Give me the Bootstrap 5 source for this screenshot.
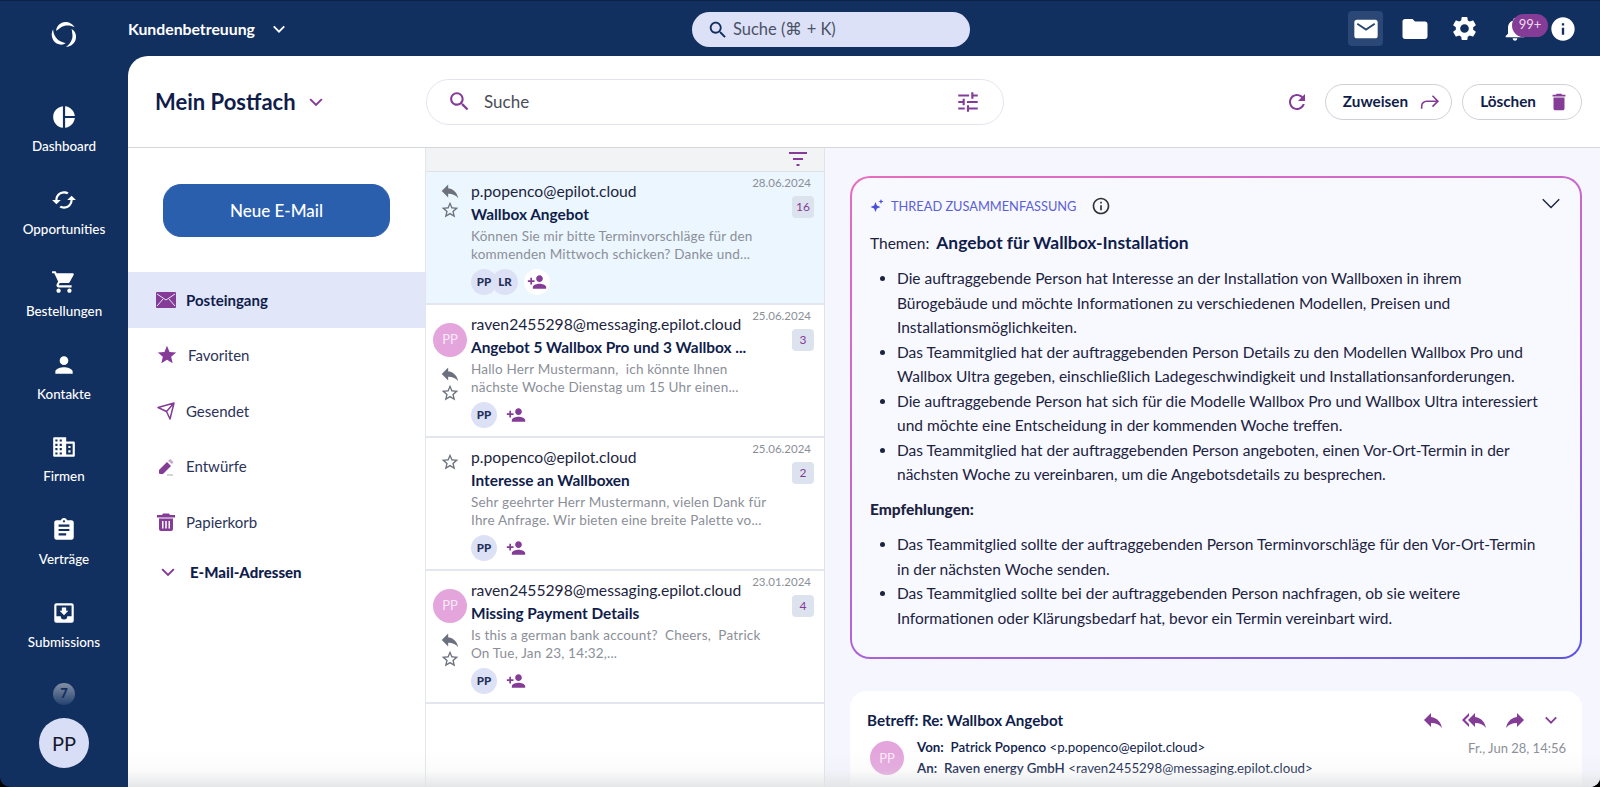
<!DOCTYPE html>
<html lang="de">
<head>
  <meta charset="UTF-8">
  <title>Mein Postfach</title>
  <link href="https://cdn.jsdelivr.net/npm/bootstrap@5.3.0/dist/css/bootstrap.min.css" rel="stylesheet">
  <style>
    html, body { height: 100%; }
    body { font-family: "Lato", "Liberation Sans", sans-serif; color: #101d4b; background: #000; overflow: hidden; }
    svg { display: block; fill: currentColor; flex: none; }
    .app-shell { width: 1600px; height: 787px; background: #12305f; border-top: 1px solid #0b2146; border-radius: 0 0 10px 10px; overflow: hidden; color: #fff; }
    .purple { color: #843c97; }

    /* left nav */
    .side-nav { width: 128px; flex: none; padding-top: 11px; }
    .logo-wrap { height: 45px; margin-bottom: 43px; }
    .nav-tile { height: 82.6px; font-size: 13.4px; font-weight: 500; padding-top: 4px; }
    .nav-tile svg { margin-bottom: 6px; }
    .beta-dot { width: 22px; height: 22px; border-radius: 50%; background: linear-gradient(#8490a6, #24426f); color: #12305f; font-size: 13px; font-weight: 900; margin-top: 5px; }
    .me-avatar { width: 50px; height: 50px; border-radius: 50%; background: #d9def7; color: #15192b; font-size: 20px; margin-top: 13px; }

    /* top bar */
    .top-row { height: 55px; flex: none; position: relative; padding-right: 23px; }
    .team-name { font-size: 15.8px; font-weight: 700; margin-right: 15px; }
    .top-search { position: absolute; left: 564px; top: 11px; width: 278px; height: 35px; border-radius: 18px; background: #dde1f8; color: #4b5266; padding-left: 15px; font-size: 16.5px; gap: 4px; }
    .top-search svg { color: #12305f; }
    .top-tile { width: 35px; height: 35px; border-radius: 4px; }
    .top-tile.on { background: #2b4776; }
    .top-tile + .top-tile { margin-left: 6px; }
    .top-tile.gear-tile { margin-left: 7px; }
    .bell-box { position: relative; width: 40px; margin-left: 11px; }
    .bell-count { position: absolute; left: 11px; top: -1px; width: 36px; height: 23px; border-radius: 12px; background: #843c97; color: #f0d8f0; font-size: 13px; }

    /* main panel */
    .main-panel { background: #fff; color: #101d4b; border-top-left-radius: 20px; overflow: hidden; position: relative; min-height: 0; }
    .head-row { height: 92px; border-bottom: 1px solid #d5d7da; padding: 0 18px 0 27px; flex: none; }
    .box-title { width: 271px; font-size: 22px; font-weight: 700; gap: 10px; }
    .box-search { width: 578px; height: 46px; border: 1px solid #e3e5ee; border-radius: 23px; padding: 0 22px 0 20px; font-size: 17px; color: #4a4d57; gap: 12px; }
    .pill-btn { height: 36px; border: 1px solid #cfd1d6; border-radius: 18px; background: #fff; color: #101d4b; font-size: 15.3px; font-weight: 700; padding: 0 11px 0 17px; gap: 12px; }
    .pill-btn + .pill-btn { margin-left: 10px; }

    .folder-col { width: 298px; flex: none; border-right: 1px solid #e3e6ee; }
    .new-mail { display: block; width: 227px; height: 53px; margin: 36px 0 35px 35px; border-radius: 18px; background: #2a5fae; border-color: #2a5fae; font-size: 17px; font-weight: 500; }
    .folder-row { height: 55.6px; padding-left: 28px; font-size: 15px; color: #2b3358; gap: 10px; }
    .folder-row.on { background: #e2e6f9; color: #101d4b; font-weight: 700; }
    .folder-addr { height: 44px; padding-left: 30px; font-size: 15px; font-weight: 900; gap: 12px; color: #101d4b; }

    .mail-col { width: 399px; flex: none; border-right: 1px solid #e0e3ea; }
    .mail-tools { height: 24px; background: #f1f3f5; border-bottom: 1px solid #dfe2e8; padding-right: 16px; }
    .mail-row { height: 133px; border-bottom: 2px solid #e3e6ee; padding: 9px 10px 0 3px; }
    .mail-row.on { background: #ebf6fe; }
    .mail-marks { width: 42px; flex: none; color: #6c717d; }
    .mark-reply { margin-top: -1px; }
    .mark-star { margin-top: -2px; }
    .mark-star.alone { margin-top: 5px; }
    .mail-body { min-width: 0; flex: 1; }
    .mail-from { font-size: 15.7px; line-height: 21px; color: #1d2440; }
    .mail-subj { font-size: 15.4px; font-weight: 700; line-height: 21px; margin-top: 2px; white-space: nowrap; }
    .mail-snip { font-size: 13.5px; letter-spacing: .2px; line-height: 18px; color: #8b8f98; width: 298px; margin-top: 2px; }
    .mail-who { margin-top: 6px; gap: 6px; }
    .face { width: 26px; height: 26px; border-radius: 50%; background: #dde1f6; font-size: 11.5px; font-weight: 900; color: #25305a; }
    .face + .face { margin-left: -5px; }
    .add-face { width: 26px; height: 26px; border-radius: 50%; }
    .mail-row.on .add-face { background: #fff; }
    .sender-dot { width: 34px; height: 34px; border-radius: 50%; background: #e3a5dc; color: #fbeaf8; font-size: 13px; margin: 9px 0 7px; }
    .mail-meta { width: 46px; flex: none; }
    .mail-date { font-size: 11.5px; color: #8b8f98; line-height: 14px; margin-top: -5px; white-space: nowrap; margin-right: 3px; }
    .mail-count { width: 22px; height: 22px; border-radius: 4px; background: #dde3ee; color: #843c97; font-size: 12px; margin-top: 6px; }

    .read-col { background: #f5f6fe; padding: 28px 18px 0 25px; min-width: 0; }
    .ai-box { height: 483px; border: 2px solid transparent; border-radius: 20px; background: linear-gradient(#f8f8ff, #f8f8ff) padding-box, linear-gradient(160deg, #e66dc0 0%, #b466d4 60%, #5c55e6 100%) border-box; padding: 16px 18px 0 18px; font-size: 15.5px; line-height: 24.5px; color: #1b2340; }
    .ai-top { height: 24px; gap: 7px; }
    .ai-label { font-size: 12.8px; color: #5a60d8; }
    .ai-close { margin-top: -6px; }
    .ai-theme { margin-top: 12px; font-size: 15.5px; line-height: 26px; }
    .ai-theme b { font-size: 17.4px; font-weight: 700; color: #101d4b; margin-left: 3px; }
    .ai-box ul { padding: 0 0 0 27px; margin: 10px 0 0; }
    .ai-box .ai-next { font-weight: 900; margin: 10px 0 0; }
    .ai-box .ai-next + ul { margin-top: 11px; }
    .letter { margin-top: 32px; height: 140px; background: #fff; border-radius: 16px; padding: 17px 17px 0 17px; font-size: 13.3px; line-height: 21px; }
    .letter-subj { font-size: 15.2px; font-weight: 700; }
    .letter-tools { gap: 15px; margin-right: 5px; }
    .letter-from { margin-top: 5px; }
    .letter-from .sender-dot { margin: 0 13px 0 3px; flex: none; }
    .letter-date { font-size: 13px; color: #8b8f98; margin: 1px -1px 0 auto; align-self: flex-start; }

    .bottom-fade { position: absolute; left: 0; right: 0; bottom: 0; height: 37px; background: linear-gradient(rgba(225,226,228,0), rgba(225,226,228,.14) 55%, rgba(225,226,228,.85)); pointer-events: none; }
  </style>
</head>
<body>
  <svg width="0" height="0" class="position-absolute">
    <symbol id="i-reply" viewBox="0 0 24 24"><path d="M10 9V5l-7 7 7 7v-4.1c5 0 8.5 1.6 11 5.1-1-5-4-10-11-11z"/></symbol>
    <symbol id="i-star-o" viewBox="0 0 24 24"><path d="M22 9.24l-7.19-.62L12 2 9.19 8.63 2 9.24l5.46 4.73L5.82 21 12 17.27 18.18 21l-1.63-7.03L22 9.24zM12 15.4l-3.76 2.27 1-4.28-3.32-2.88 4.38-.38L12 6.1l1.71 4.04 4.38.38-3.32 2.88 1 4.28L12 15.4z"/></symbol>
    <symbol id="i-add" viewBox="0 0 24 24"><path d="M15 12c2.21 0 4-1.79 4-4s-1.79-4-4-4-4 1.79-4 4 1.79 4 4 4zm-9-2V7H4v3H1v2h3v3h2v-3h3v-2H6zm9 4c-2.67 0-8 1.34-8 4v2h16v-2c0-2.66-5.33-4-8-4z"/></symbol>
    <symbol id="i-search" viewBox="0 0 24 24"><path d="M15.5 14h-.79l-.28-.27C15.41 12.59 16 11.11 16 9.5 16 5.91 13.09 3 9.5 3S3 5.91 3 9.5 5.91 16 9.5 16c1.61 0 3.09-.59 4.23-1.57l.27.28v.79l5 4.99L20.49 19l-4.99-5zm-6 0C7.01 14 5 11.99 5 9.5S7.01 5 9.5 5 14 7.01 14 9.5 11.99 14 9.5 14z"/></symbol>
    <symbol id="i-down" viewBox="0 0 24 24"><path d="M5 8.5l7 7 7-7" fill="none" stroke="currentColor" stroke-width="2.4"/></symbol>
    <symbol id="i-trash" viewBox="0 0 24 24"><path d="M6 19c0 1.1.9 2 2 2h8c1.1 0 2-.9 2-2V7H6v12zM19 4h-3.5l-1-1h-5l-1 1H5v2h14V4z"/></symbol>
  </svg>

  <div class="app-shell d-flex">
    <nav class="side-nav d-flex flex-column align-items-center">
      <div class="logo-wrap d-flex align-items-center justify-content-center">
        <svg width="29" height="29" viewBox="0 0 30 30">
          <path d="M6.500 11.500C6 6.500 11 2 16 2c4 0 7.500 2 9.500 5.500-4.500-2.500-10.500-2.500-14 0-2 1.500-3.500 2.500-5 4z"/>
          <path d="M6.500 11.500C6 6.500 11 2 16 2c4 0 7.500 2 9.500 5.500-4.500-2.500-10.500-2.500-14 0-2 1.500-3.500 2.500-5 4z" transform="rotate(120 15 15)"/>
          <path d="M6.500 11.500C6 6.500 11 2 16 2c4 0 7.500 2 9.500 5.500-4.500-2.500-10.500-2.500-14 0-2 1.500-3.500 2.500-5 4z" transform="rotate(240 15 15)"/>
        </svg>
      </div>
      <div class="nav-tile d-flex flex-column align-items-center"><svg width="26" height="26" viewBox="0 0 24 24"><path d="M11 2v20c-5.07-.5-9-4.79-9-10s3.93-9.5 9-10zm2.03 0v8.99H22c-.47-4.74-4.24-8.52-8.97-8.99zm0 11.01V22c4.74-.47 8.5-4.25 8.97-8.99h-8.97z"/></svg>Dashboard</div>
      <div class="nav-tile d-flex flex-column align-items-center"><svg width="26" height="26" viewBox="0 0 24 24"><path d="M19 8l-4 4h3c0 3.31-2.69 6-6 6-1.01 0-1.97-.25-2.8-.7l-1.46 1.46C8.97 19.54 10.43 20 12 20c4.42 0 8-3.58 8-8h3l-4-4zM6 12c0-3.31 2.69-6 6-6 1.01 0 1.97.25 2.8.7l1.46-1.46C15.03 4.46 13.57 4 12 4c-4.42 0-8 3.58-8 8H1l4 4 4-4H6z"/></svg>Opportunities</div>
      <div class="nav-tile d-flex flex-column align-items-center"><svg width="26" height="26" viewBox="0 0 24 24"><path d="M7 18c-1.1 0-1.99.9-1.99 2S5.9 22 7 22s2-.9 2-2-.9-2-2-2zM1 2v2h2l3.6 7.59-1.35 2.45c-.16.28-.25.61-.25.96 0 1.1.9 2 2 2h12v-2H7.42c-.14 0-.25-.11-.25-.25l.03-.12.9-1.63h7.45c.75 0 1.41-.41 1.75-1.03l3.58-6.49c.08-.14.12-.31.12-.48 0-.55-.45-1-1-1H5.21l-.94-2H1zm16 16c-1.1 0-1.99.9-1.99 2s.89 2 1.99 2 2-.9 2-2-.9-2-2-2z"/></svg>Bestellungen</div>
      <div class="nav-tile d-flex flex-column align-items-center"><svg width="26" height="26" viewBox="0 0 24 24"><path d="M12 12c2.21 0 4-1.79 4-4s-1.79-4-4-4-4 1.79-4 4 1.79 4 4 4zm0 2c-2.67 0-8 1.34-8 4v2h16v-2c0-2.66-5.33-4-8-4z"/></svg>Kontakte</div>
      <div class="nav-tile d-flex flex-column align-items-center"><svg width="26" height="26" viewBox="0 0 24 24"><path fill-rule="evenodd" d="M3 3h11v4h7a1 1 0 0 1 1 1v12a1 1 0 0 1-1 1H3a1 1 0 0 1-1-1V4a1 1 0 0 1 1-1zM4 5v2h2V5zm4 0v2h2V5zM4 9v2h2V9zm4 0v2h2V9zM4 13v2h2v-2zm4 0v2h2v-2zM4 17v2h2v-2zm4 0v2h2v-2zM14 9v10h6V9zm2 2h2v2h-2zm0 4h2v2h-2z"/></svg>Firmen</div>
      <div class="nav-tile d-flex flex-column align-items-center"><svg width="26" height="26" viewBox="0 0 24 24"><path d="M19 3h-4.18C14.4 1.84 13.3 1 12 1c-1.3 0-2.4.84-2.82 2H5c-1.1 0-2 .9-2 2v14c0 1.1.9 2 2 2h14c1.1 0 2-.9 2-2V5c0-1.1-.9-2-2-2zm-7 0c.55 0 1 .45 1 1s-.45 1-1 1-1-.45-1-1 .45-1 1-1zm2 14H7v-2h7v2zm3-4H7v-2h10v2zm0-4H7V7h10v2z"/></svg>Verträge</div>
      <div class="nav-tile d-flex flex-column align-items-center"><svg width="26" height="26" viewBox="0 0 24 24"><path fill-rule="evenodd" d="M5 3h14a2 2 0 0 1 2 2v14a2 2 0 0 1-2 2H5a2 2 0 0 1-2-2V5a2 2 0 0 1 2-2zm0 12h4a3 3 0 0 0 6 0h4V5H5zm11-5l-4 4-4-4h2V7h4v3z"/></svg>Submissions</div>
      <div class="beta-dot d-flex align-items-center justify-content-center">7</div>
      <div class="me-avatar d-flex align-items-center justify-content-center">PP</div>
    </nav>

    <div class="flex-grow-1 d-flex flex-column">
      <header class="top-row d-flex align-items-center">
        <span class="team-name">Kundenbetreuung</span>
        <svg width="18" height="18"><use href="#i-down"/></svg>
        <div class="top-search d-flex align-items-center"><svg width="22" height="22"><use href="#i-search"/></svg>Suche (⌘ + K)</div>
        <div class="ms-auto d-flex align-items-center gap-2">
          <div class="top-tile on d-flex align-items-center justify-content-center"><svg width="28" height="28" viewBox="0 0 24 24"><path d="M20 4H4c-1.1 0-2 .9-2 2v12c0 1.1.9 2 2 2h16c1.100 0 2-.9 2-2V6c0-1.100-.9-2-2-2z"/><path d="M4.500 7.500l7.500 5 7.500-5" fill="none" stroke="#2b4776" stroke-width="1.600"/></svg></div>
          <div class="top-tile d-flex align-items-center justify-content-center"><svg width="30" height="30" viewBox="0 0 24 24"><path d="M10 4H4c-1.1 0-2 .9-2 2v12c0 1.1.9 2 2 2h16c1.1 0 2-.9 2-2V8c0-1.1-.9-2-2-2h-8l-2-2z"/></svg></div>
          <div class="top-tile gear-tile d-flex align-items-center justify-content-center"><svg width="29" height="29" viewBox="0 0 24 24"><path d="M19.14 12.94c.04-.3.06-.61.06-.94 0-.32-.02-.64-.07-.94l2.03-1.58c.18-.14.23-.41.12-.61l-1.92-3.32c-.12-.22-.37-.29-.59-.22l-2.39.96c-.5-.38-1.03-.7-1.62-.94l-.36-2.54c-.04-.24-.24-.41-.48-.41h-3.84c-.24 0-.43.17-.47.41l-.36 2.54c-.59.24-1.13.57-1.62.94l-2.39-.96c-.22-.08-.47 0-.59.22L2.74 8.87c-.12.21-.08.47.12.61l2.03 1.58c-.05.3-.09.63-.09.94s.02.64.07.94l-2.03 1.58c-.18.14-.23.41-.12.61l1.92 3.32c.12.22.37.29.59.22l2.39-.96c.5.38 1.03.7 1.62.94l.36 2.54c.05.24.24.41.48.41h3.84c.24 0 .44-.17.47-.41l.36-2.54c.59-.24 1.13-.56 1.62-.94l2.39.96c.22.08.47 0 .59-.22l1.92-3.32c.12-.22.07-.47-.12-.61l-2.01-1.58zM12 15.6c-1.98 0-3.6-1.62-3.6-3.6s1.62-3.6 3.6-3.6 3.6 1.62 3.6 3.6-1.62 3.6-3.6 3.6z"/></svg></div>
          <div class="bell-box d-flex align-items-center">
            <svg width="28" height="28" viewBox="0 0 24 24"><path d="M12 22c1.1 0 2-.9 2-2h-4c0 1.1.9 2 2 2zm6-6v-5c0-3.07-1.63-5.64-4.5-6.32V4c0-.83-.67-1.5-1.5-1.5s-1.5.67-1.5 1.500v.68C7.64 5.36 6 7.92 6 11v5l-2 2v1h16v-1l-2-2z"/></svg>
            <span class="bell-count d-flex align-items-center justify-content-center">99+</span>
          </div>
          <svg width="28" height="28" viewBox="0 0 24 24"><path d="M12 2C6.48 2 2 6.48 2 12s4.48 10 10 10 10-4.48 10-10S17.52 2 12 2zm1 15h-2v-6h2v6zm0-8h-2V7h2v2z"/></svg>
        </div>
      </header>

      <main class="main-panel flex-grow-1 d-flex flex-column">
        <div class="head-row d-flex align-items-center">
          <div class="box-title d-flex align-items-center">Mein Postfach <svg class="purple" width="20" height="20"><use href="#i-down"/></svg></div>
          <div class="box-search d-flex align-items-center">
            <svg class="purple" width="25" height="25"><use href="#i-search"/></svg><span>Suche</span>
            <svg class="purple ms-auto" width="26" height="26" viewBox="0 0 24 24"><path d="M3 17v2h6v-2H3zM3 5v2h10V5H3zm10 16v-2h8v-2h-8v-2h-2v6h2zM7 9v2H3v2h4v2h2V9H7zm14 4v-2H11v2h10zm-6-4h2V7h4V5h-4V3h-2v6z"/></svg>
          </div>
          <svg class="purple ms-auto" width="24" height="24" viewBox="0 0 24 24"><path d="M17.65 6.35C16.2 4.9 14.21 4 12 4c-4.42 0-7.990 3.58-7.990 8s3.570 8 7.990 8c3.730 0 6.840-2.550 7.730-6h-2.080c-.82 2.330-3.040 4-5.650 4-3.310 0-6-2.690-6-6s2.690-6 6-6c1.660 0 3.140.69 4.220 1.780L13 11h7V4l-2.350 2.350z"/></svg>
          <button class="pill-btn d-flex align-items-center ms-3">Zuweisen <svg class="purple" width="20" height="20" viewBox="0 0 24 24"><path d="M2 20v-3a6 6 0 0 1 6-6h13M15 4.500l6.500 6.500L15 17.500" fill="none" stroke="currentColor" stroke-width="1.900"/></svg></button>
          <button class="pill-btn d-flex align-items-center">Löschen <svg class="purple" width="22" height="22"><use href="#i-trash"/></svg></button>
        </div>

        <div class="d-flex flex-grow-1" style="min-height:0">
          <aside class="folder-col">
            <button class="btn btn-primary new-mail">Neue E-Mail</button>
            <div class="folder-row on d-flex align-items-center"><svg class="purple" width="20" height="16" viewBox="0 0 20 16"><path d="M1 0h18a1 1 0 0 1 1 1v14a1 1 0 0 1-1 1H1a1 1 0 0 1-1-1V1a1 1 0 0 1 1-1z"/><path d="M1 2l9 6 9-6M1 14l6-7M19 14l-6-7" fill="none" stroke="#e2e6f9" stroke-width="1"/></svg>Posteingang</div>
            <div class="folder-row d-flex align-items-center"><svg class="purple" width="22" height="22" viewBox="0 0 24 24"><path d="M12 17.270L18.180 21l-1.640-7.030L22 9.240l-7.190-.61L12 2 9.190 8.630 2 9.240l5.460 4.730L5.820 21z"/></svg>Favoriten</div>
            <div class="folder-row d-flex align-items-center"><svg class="purple" width="20" height="20" viewBox="0 0 20 20"><path d="M2 6.500L18 2l-4 16-3.500-7.500zM10.500 10.500L18 2" fill="none" stroke="currentColor" stroke-width="1.500" stroke-linejoin="round"/></svg>Gesendet</div>
            <div class="folder-row d-flex align-items-center"><svg class="purple" width="20" height="20" viewBox="0 0 20 20"><path d="M3 13L11 5l4 4-8 8H4a1 1 0 0 1-1-1z"/><path d="M12 4l1.500-1.500a1 1 0 0 1 1.400 0l2 2a1 1 0 0 1 0 1.400L16 7z" opacity=".45"/><path d="M11 18h6" stroke="#aaa" fill="none"/></svg>Entwürfe</div>
            <div class="folder-row d-flex align-items-center"><svg class="purple" width="20" height="20" viewBox="0 0 20 20"><path d="M1 3h5l1-1.500h6L14 3h5v2.500H1z"/><path fill-rule="evenodd" d="M3 6.500h14V17a2 2 0 0 1-2 2H5a2 2 0 0 1-2-2zM6 9v7.500h1.500V9zm3.250 0v7.500h1.500V9zM12.500 9v7.500H14V9z"/></svg>Papierkorb</div>
            <div class="folder-addr d-flex align-items-center"><svg class="purple" width="20" height="20"><use href="#i-down"/></svg>E-Mail-Adressen</div>
          </aside>

          <section class="mail-col">
            <div class="mail-tools d-flex align-items-center justify-content-end">
              <svg class="purple" width="20" height="18" viewBox="0 0 20 18"><path d="M1 2h18M5 8h10M8.500 14h3" fill="none" stroke="currentColor" stroke-width="2"/></svg>
            </div>

            <div class="mail-row on d-flex">
              <div class="mail-marks d-flex flex-column align-items-center">
                <svg class="mark-reply" width="22" height="22"><use href="#i-reply"/></svg>
                <svg class="mark-star" width="20" height="20"><use href="#i-star-o"/></svg>
              </div>
              <div class="mail-body">
                <div class="mail-from">p.popenco@epilot.cloud</div>
                <div class="mail-subj">Wallbox Angebot</div>
                <div class="mail-snip">Können Sie mir bitte Terminvorschläge für den kommenden Mittwoch schicken? Danke und...</div>
                <div class="mail-who d-flex align-items-center">
                  <div class="d-flex"><span class="face d-flex align-items-center justify-content-center">PP</span><span class="face d-flex align-items-center justify-content-center">LR</span></div>
                  <span class="add-face purple d-flex align-items-center justify-content-center"><svg width="20" height="20"><use href="#i-add"/></svg></span>
                </div>
              </div>
              <div class="mail-meta d-flex flex-column align-items-end">
                <div class="mail-date">28.06.2024</div><div class="mail-count d-flex align-items-center justify-content-center">16</div>
              </div>
            </div>

            <div class="mail-row d-flex">
              <div class="mail-marks d-flex flex-column align-items-center">
                <span class="sender-dot d-flex align-items-center justify-content-center">PP</span>
                <svg class="mark-reply" width="22" height="22"><use href="#i-reply"/></svg>
                <svg class="mark-star" width="20" height="20"><use href="#i-star-o"/></svg>
              </div>
              <div class="mail-body">
                <div class="mail-from">raven2455298@messaging.epilot.cloud</div>
                <div class="mail-subj">Angebot 5 Wallbox Pro und 3 Wallbox ...</div>
                <div class="mail-snip">Hallo Herr Mustermann,&nbsp; ich könnte Ihnen nächste Woche Dienstag um 15 Uhr einen...</div>
                <div class="mail-who d-flex align-items-center">
                  <span class="face d-flex align-items-center justify-content-center">PP</span>
                  <span class="add-face purple d-flex align-items-center justify-content-center"><svg width="20" height="20"><use href="#i-add"/></svg></span>
                </div>
              </div>
              <div class="mail-meta d-flex flex-column align-items-end">
                <div class="mail-date">25.06.2024</div><div class="mail-count d-flex align-items-center justify-content-center">3</div>
              </div>
            </div>

            <div class="mail-row d-flex">
              <div class="mail-marks d-flex flex-column align-items-center">
                <svg class="mark-star alone" width="20" height="20"><use href="#i-star-o"/></svg>
              </div>
              <div class="mail-body">
                <div class="mail-from">p.popenco@epilot.cloud</div>
                <div class="mail-subj">Interesse an Wallboxen</div>
                <div class="mail-snip">Sehr geehrter Herr Mustermann, vielen Dank für Ihre Anfrage. Wir bieten eine breite Palette vo...</div>
                <div class="mail-who d-flex align-items-center">
                  <span class="face d-flex align-items-center justify-content-center">PP</span>
                  <span class="add-face purple d-flex align-items-center justify-content-center"><svg width="20" height="20"><use href="#i-add"/></svg></span>
                </div>
              </div>
              <div class="mail-meta d-flex flex-column align-items-end">
                <div class="mail-date">25.06.2024</div><div class="mail-count d-flex align-items-center justify-content-center">2</div>
              </div>
            </div>

            <div class="mail-row d-flex">
              <div class="mail-marks d-flex flex-column align-items-center">
                <span class="sender-dot d-flex align-items-center justify-content-center">PP</span>
                <svg class="mark-reply" width="22" height="22"><use href="#i-reply"/></svg>
                <svg class="mark-star" width="20" height="20"><use href="#i-star-o"/></svg>
              </div>
              <div class="mail-body">
                <div class="mail-from">raven2455298@messaging.epilot.cloud</div>
                <div class="mail-subj">Missing Payment Details</div>
                <div class="mail-snip">Is this a german bank account?&nbsp; Cheers,&nbsp; Patrick On Tue, Jan 23, 14:32,...</div>
                <div class="mail-who d-flex align-items-center">
                  <span class="face d-flex align-items-center justify-content-center">PP</span>
                  <span class="add-face purple d-flex align-items-center justify-content-center"><svg width="20" height="20"><use href="#i-add"/></svg></span>
                </div>
              </div>
              <div class="mail-meta d-flex flex-column align-items-end">
                <div class="mail-date">23.01.2024</div><div class="mail-count d-flex align-items-center justify-content-center">4</div>
              </div>
            </div>
          </section>

          <section class="read-col flex-grow-1">
            <div class="ai-box">
              <div class="ai-top d-flex align-items-center">
                <svg width="14" height="14" viewBox="0 0 14 14" style="color:#4c50d8"><path d="M5.500 3l1.400 3.600 3.600 1.400-3.600 1.400L5.500 13 4.100 9.400.5 8l3.600-1.400zM11 0l.7 1.800 1.800.7-1.800.7L11 5l-.7-1.800-1.800-.7 1.800-.7z"/></svg>
                <span class="ai-label">THREAD ZUSAMMENFASSUNG</span>
                <svg class="ms-2" width="20" height="20" viewBox="0 0 24 24" style="color:#333"><path d="M11 7h2v2h-2zm0 4h2v6h-2zm1-9C6.480 2 2 6.480 2 12s4.480 10 10 10 10-4.480 10-10S17.520 2 12 2zm0 18c-4.410 0-8-3.590-8-8s3.590-8 8-8 8 3.590 8 8-3.590 8-8 8z"/></svg>
                <svg class="ai-close ms-auto" width="22" height="22" viewBox="0 0 24 24"><path d="M3 8l9 9 9-9" fill="none" stroke="#1b2340" stroke-width="1.500"/></svg>
              </div>
              <div class="ai-theme">Themen: <b>Angebot für Wallbox-Installation</b></div>
              <ul>
                <li>Die auftraggebende Person hat Interesse an der Installation von Wallboxen in ihrem<br>Bürogebäude und möchte Informationen zu verschiedenen Modellen, Preisen und<br>Installationsmöglichkeiten.</li>
                <li>Das Teammitglied hat der auftraggebenden Person Details zu den Modellen Wallbox Pro und<br>Wallbox Ultra gegeben, einschließlich Ladegeschwindigkeit und Installationsanforderungen.</li>
                <li>Die auftraggebende Person hat sich für die Modelle Wallbox Pro und Wallbox Ultra interessiert<br>und möchte eine Entscheidung in der kommenden Woche treffen.</li>
                <li>Das Teammitglied hat der auftraggebenden Person angeboten, einen Vor-Ort-Termin in der<br>nächsten Woche zu vereinbaren, um die Angebotsdetails zu besprechen.</li>
              </ul>
              <p class="ai-next">Empfehlungen:</p>
              <ul>
                <li>Das Teammitglied sollte der auftraggebenden Person Terminvorschläge für den Vor-Ort-Termin<br>in der nächsten Woche senden.</li>
                <li>Das Teammitglied sollte bei der auftraggebenden Person nachfragen, ob sie weitere<br>Informationen oder Klärungsbedarf hat, bevor ein Termin vereinbart wird.</li>
              </ul>
            </div>

            <div class="letter">
              <div class="d-flex align-items-center">
                <span class="letter-subj">Betreff: Re: Wallbox Angebot</span>
                <div class="letter-tools ms-auto d-flex align-items-center purple">
                  <svg width="24" height="24"><use href="#i-reply"/></svg>
                  <svg width="28" height="24" viewBox="0 0 24 24"><path d="M7 8V5l-7 7 7 7v-3l-4-4 4-4zm6 1V5l-7 7 7 7v-4.100c5 0 8.500 1.600 11 5.100-1-5-4-10-11-11z"/></svg>
                  <svg width="24" height="24" viewBox="0 0 24 24"><path d="M14 9V5l7 7-7 7v-4.100c-5 0-8.500 1.600-11 5.100 1-5 4-10 11-11z"/></svg>
                  <svg width="18" height="18"><use href="#i-down"/></svg>
                </div>
              </div>
              <div class="letter-from d-flex align-items-center">
                <span class="sender-dot d-flex align-items-center justify-content-center">PP</span>
                <div>
                  <div><b>Von:</b>&nbsp; <b class="fw-semibold">Patrick Popenco</b> &lt;p.popenco@epilot.cloud&gt;</div>
                  <div><b>An:</b>&nbsp; <b class="fw-semibold">Raven energy GmbH</b> &lt;raven2455298@messaging.epilot.cloud&gt;</div>
                </div>
                <span class="letter-date">Fr., Jun 28, 14:56</span>
              </div>
            </div>
          </section>
        </div>
        <div class="bottom-fade"></div>
      </main>
    </div>
  </div>
</body>
</html>
